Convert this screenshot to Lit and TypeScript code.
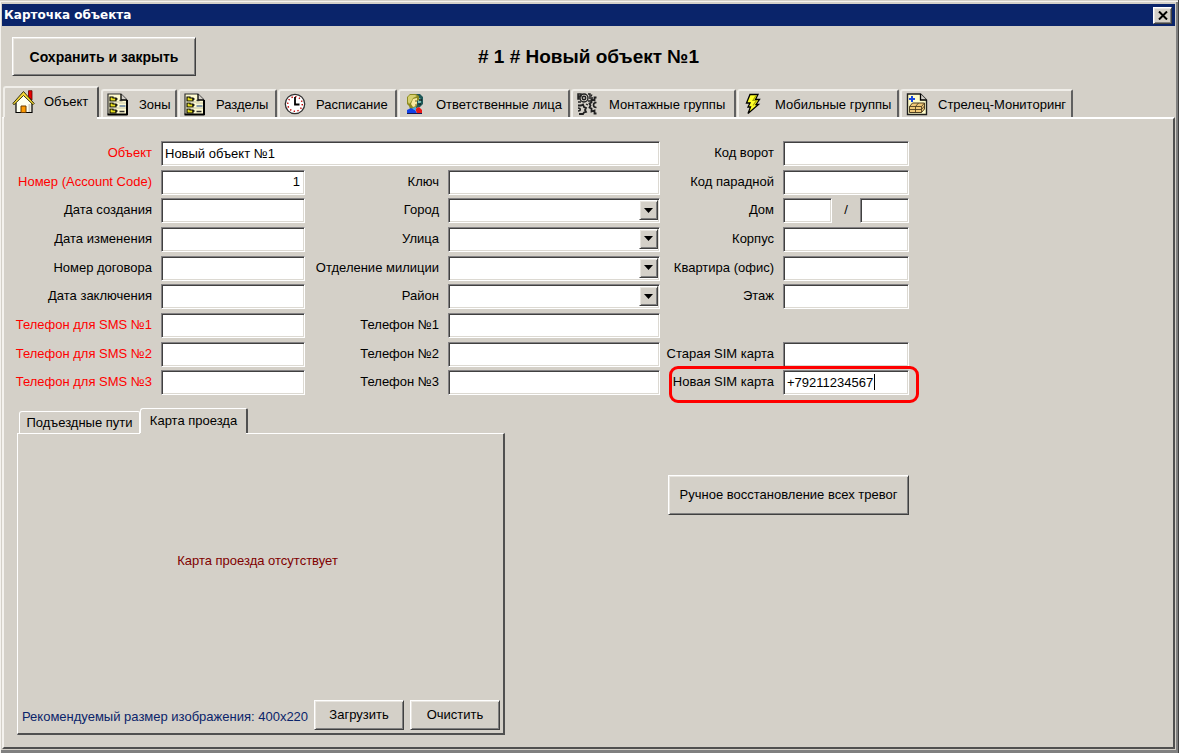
import { LitElement, html, css, svg, nothing } from "lit";
import { customElement, property, state } from "lit/decorators.js";
import { classMap } from "lit/directives/class-map.js";

const listIcon = svg`
  <path d="M1 1h13l6 6v14.500h-19z" fill="#fffbd0"/>
  <path d="M1 21.500V1h13l6 6" fill="none" stroke="#303030" stroke-width="1.200"/>
  <path d="M.500 21.500h20M20 7v15" stroke="#000" stroke-width="2"/>
  <path d="M14 1v6h6" fill="#d4d0c8" stroke="#000" stroke-width="1.300"/>
  <path d="M3 4h3v1h3v3H3zM3 10h3v1h3v3H3zM3 16h3v1h3v3H3z" fill="#e8e020" stroke="#000" stroke-width="1.100"/>
  <path d="M8.500 6h2M8.500 12h2M8.500 18h2" stroke="#000" stroke-width="1.500"/>
  <path d="M12.500 7.500h3M12.500 18.500h5" stroke="#303030" stroke-width="1.400"/>
  <path d="M12.500 13h6" stroke="#5a78a0" stroke-width="1.500"/>
  <path d="M2 9h10M12 10h7M2 15h17" stroke="#b8b8a0" stroke-width=".8"/>`;

const icons: Record<string, unknown> = {
  house: svg`
    <path d="M4 12 11.500 5l8 8v9.500H4z" fill="#fffff0"/>
    <path d="M4 13v9.500h16V12" fill="none" stroke="#000" stroke-width="1.200"/>
    <path d="M16.500.700h3.500V10l-3.500-3.500z" fill="#e80000" stroke="#600000" stroke-width=".8"/>
    <path d="M.800 13.500 11.500 1.500l10.700 12-1.200 1.200L11.500 5.500 2 14.700z" fill="#f8d838" stroke="#202000" stroke-width=".9"/>
    <path d="M9 22.500V16h5v6.500z" fill="#ff9a00" stroke="#6b3b00" stroke-width="1"/>
    <path d="M17.500 14v8" stroke="#d4d0c8" stroke-width="2"/>`,
  list: listIcon,
  clock: svg`
    <circle cx="11" cy="11" r="9.700" fill="#fff" stroke="#303030" stroke-width="1.300"/>
    <circle cx="11" cy="11" r="7.300" fill="none" stroke="#c00000" stroke-width="1.500" stroke-dasharray="1.300 2.522"/>
    <path d="M11 4v7.500h4.500" fill="none" stroke="#000" stroke-width="1.800"/>`,
  people: svg`
    <path d="M12 1h4l3 3v7l-3 3-4 1z" fill="#205858"/>
    <path d="M14 4l3 2v3l-1 2-2 1z" fill="#78c0b8"/>
    <path d="M15 7h3M14 11h3" stroke="#102020" stroke-width="1.500"/>
    <path d="M6 1h6l3 2v4l-2 1v5l-3 3H6l-1-3-2-2V4z" fill="#8c8a20"/>
    <path d="M6 2h5l2 1-4 2-2 4-2 2-1-2V4z" fill="#d6d070"/>
    <path d="M9 6l4-1v5l-1 3-3 1-2-3z" fill="#f8e8a0"/>
    <path d="M11 8h2M11 12h1.500" stroke="#705818"/>
    <path d="M3 20v-3l4-2 4 2 2 3z" fill="#1040e8"/>
    <path d="M11 16l4-2 3 3v3h-5z" fill="#e81818"/>
    <path d="M8 15l4-1v4z" fill="#48a8e8"/>
    <path d="M3 20.500h15" stroke="#181850"/>`,
  gears: svg`
    <g fill="none" stroke="#202020">
      <circle cx="7" cy="5" r="1.700" stroke-width="1.500"/>
      <circle cx="7" cy="5" r="4" stroke-width="1.400"/>
      <path d="M1 1h3v2H2v3H1zM11 1h2v3M11 8h3M1 9h3" stroke-width="1.500"/>
      <path d="M19.500 4.500h-2v3l-3-1v3l-2 1 1 2-1 2 2 1v3l3-1v3h2" stroke-width="1.800"/>
      <path d="M19.500 9.500c-4 0-4 5 0 5" stroke-width="1.600"/>
      <path d="M1 12.500h3l2-1 1 2.500 2 1-1 2 1 2-2 .500-1 1.500H2" stroke-width="1.800"/>
      <path d="M1 15c3 0 3 3 0 3" stroke-width="1.500"/>
      <path d="M12 5h4M15 1.500l-1 2M9 11l2 1" stroke-width="1.300"/>
    </g>`,
  bolt: svg`
    <path d="M7 1.500h8l-2.500 5h4l-3.500 5h2.500L5 20.500l2.500-6.500H5l2-4H3.500z" fill="#ffff28" stroke="#000" stroke-width="1.300"/>
    <path d="M13 2.500l-3 5h3.500l-3.500 5" fill="none" stroke="#a8a800" stroke-width="1.200"/>`,
  boxes: svg`
    <path d="M1.500 1h13l6 6v14.500h-19z" fill="#fffcc8" stroke="#202020" stroke-width="1.400"/>
    <path d="M14.500 1v6h6" fill="#d4d0c8" stroke="#000" stroke-width="1.300"/>
    <path d="M6 3v6M3 6h6" stroke="#1848e0" stroke-width="2"/>
    <path d="M3.500 13.500l3-3.500h12v6l-3 3.500h-12z" fill="#f0c878" stroke="#504020" stroke-width="1"/>
    <path d="M3.500 13.500h12v6M15.500 13.500l3-3.500M9.500 19.500v-6l3-3.500M3.500 16.500h12l3-3.500" fill="none" stroke="#504020" stroke-width=".9"/>`,
};

interface TabInfo {
  icon: string;
  label: string;
}

const tabs: TabInfo[] = [
  { icon: "house", label: "Объект" },
  { icon: "list", label: "Зоны" },
  { icon: "list", label: "Разделы" },
  { icon: "clock", label: "Расписание" },
  { icon: "people", label: "Ответственные лица" },
  { icon: "gears", label: "Монтажные группы" },
  { icon: "bolt", label: "Мобильные группы" },
  { icon: "boxes", label: "Стрелец-Мониторинг" },
];

type Kind = "text" | "select" | "pair" | "wide" | "number" | "marked" | "blank";

interface Field {
  label: string;
  kind?: Kind;
  value?: string;
  required?: boolean;
}

const rows: Field[][] = [
  [{ label: "Объект", kind: "wide", value: "Новый объект №1", required: true }, { label: "Код ворот" }],
  [{ label: "Номер (Account Code)", kind: "number", value: "1", required: true }, { label: "Ключ" }, { label: "Код парадной" }],
  [{ label: "Дата создания" }, { label: "Город", kind: "select" }, { label: "Дом", kind: "pair" }],
  [{ label: "Дата изменения" }, { label: "Улица", kind: "select" }, { label: "Корпус" }],
  [{ label: "Номер договора" }, { label: "Отделение милиции", kind: "select" }, { label: "Квартира (офис)" }],
  [{ label: "Дата заключения" }, { label: "Район", kind: "select" }, { label: "Этаж" }],
  [{ label: "Телефон для SMS №1", required: true }, { label: "Телефон №1" }, { label: "", kind: "blank" }],
  [{ label: "Телефон для SMS №2", required: true }, { label: "Телефон №2" }, { label: "Старая SIM карта" }],
  [{ label: "Телефон для SMS №3", required: true }, { label: "Телефон №3" }, { label: "Новая SIM карта", kind: "marked", value: "+79211234567" }],
];

@customElement("tab-icon")
export class TabIcon extends LitElement {
  static styles = css`
    :host { display: block; width: 24px; height: 24px; }
    svg { display: block; width: 24px; height: 24px; }
  `;
  @property() name = "";
  render() {
    return html`<svg viewBox="0 0 24 24" aria-hidden="true">${icons[this.name]}</svg>`;
  }
}

@customElement("app-root")
export class AppRoot extends LitElement {
  static styles = css`
    :host {
      display: block;
      font: 13px/16px "Liberation Sans", Arial, sans-serif;
      color: #000;
    }
    * { box-sizing: border-box; }
    button, input, select { font: inherit; color: inherit; margin: 0; border-radius: 0; outline: none; }
    .window {
      display: flex;
      flex-direction: column;
      min-height: 100vh;
      padding: 4px 3px 4px 2px;
      background: #d4d0c8;
      border-right: 1px solid #404040;
      box-shadow: inset 0 1px #d4d0c8, inset 1px 2px #f4f2ee, inset -2px -3px #808080;
    }
    .titlebar {
      display: flex;
      align-items: center;
      justify-content: space-between;
      height: 22px;
      padding: 0 3px 0 2px;
      background: #0a246a;
      color: #fff;
      font: bold 12px/16px "DejaVu Sans", sans-serif;
    }
    .close { display: grid; place-items: center; width: 19px; height: 17px; }
    .push {
      padding: 0;
      background: #d4d0c8;
      border: 1px solid;
      border-color: #fff #404040 #404040 #fff;
      box-shadow: inset 1px 1px #e8e5df, inset -1px -1px #808080;
      white-space: nowrap;
    }
    .header {
      display: grid;
      grid-template-columns: 1fr auto 1fr;
      align-items: center;
      padding: 11px 10px 10px;
    }
    .save { width: 184px; height: 39px; font-size: 14px; font-weight: bold; }
    h1 { margin: 0; font-size: 19px; line-height: 22px; }
    .tabs {
      display: grid;
      grid-template-columns: 98px 77px 100px 120px 173px 166px 163px 174px;
      align-items: end;
      height: 31px;
      padding-left: 1px;
    }
    .tab {
      display: flex;
      align-items: center;
      gap: 8px;
      height: 28px;
      margin-right: 1px;
      padding: 1px 0 0 4px;
      background: #d4d0c8;
      border: 0 solid;
      border-width: 2px 2px 0 2px;
      border-color: #f0eee9 #606060 #f0eee9 #f0eee9;
      border-radius: 3px 2px 0 0;
      white-space: nowrap;
    }
    .tab.on { height: 31px; margin-right: 2px; padding: 0 0 2px 7px; border-right-color: #505050; }
    .panel {
      flex: 1;
      border: 2px solid;
      border-color: #fff #505050 #505050 #f4f2ee;
      padding: 22px 0 12px;
    }
    .joined { position: relative; }
    .joined::before {
      content: "";
      position: absolute;
      top: -2px;
      left: 0;
      width: 93px;
      height: 2px;
      background: #d4d0c8;
    }
    .fields {
      display: grid;
      grid-template-columns: 157px 144px 143px 212px 123px 126px;
      grid-template-rows: repeat(9, 1fr);
      height: 258px;
    }
    label { padding: 4px 9px 0 0; text-align: right; white-space: nowrap; }
    .required { color: #f00; }
    .cell { display: flex; align-items: start; }
    .wide { grid-column: span 3; }
    .skip { grid-column: span 2; }
    .box {
      width: 100%;
      min-width: 0;
      height: 25px;
      padding: 0 4px 1px 3px;
      appearance: none;
      background: #fff;
      border: 1px solid;
      border-color: #848284 #fff #fff #848284;
      box-shadow: inset 1px 1px #404040, inset -1px -1px #dcd9d2;
    }
    .number { text-align: right; }
    .combo { display: grid; grid-template-columns: 1fr 21px; }
    .combo .box { grid-area: 1 / 1 / 2 / 3; }
    .arrow {
      grid-area: 1 / 2;
      display: grid;
      place-items: center;
      width: 19px;
      height: 20px;
      margin-top: 2px;
      pointer-events: none;
    }
    .pair { justify-content: space-between; }
    .pair .box { width: 49px; }
    .slash { padding-top: 4px; }
    .marked { position: relative; }
    .mark {
      position: absolute;
      top: -4px;
      right: -10px;
      width: 250px;
      height: 37px;
      border: 3px solid #f00;
      border-radius: 9px;
      pointer-events: none;
    }
    .caret { position: absolute; left: 91px; top: 4px; width: 1px; height: 16px; background: #000; }
    .lower { display: grid; grid-template-columns: 488px auto; column-gap: 163px; justify-content: start; padding: 9px 0 0 13px; }
    .subtabs { display: flex; align-items: end; height: 25px; padding-left: 2px; }
    .subtab {
      width: 121px;
      height: 22px;
      padding: 0;
      background: #d4d0c8;
      border: 1px solid #fff;
      border-bottom: 0;
      border-radius: 3px 2px 0 0;
      white-space: nowrap;
    }
    .subtab.on { width: 108px; height: 25px; padding-bottom: 1px; border-right: 2px solid #505050; }
    .map {
      position: relative;
      display: grid;
      grid-template-rows: 1fr auto;
      height: 302px;
      padding: 0 3px 3px;
      border: solid;
      border-width: 1px 2px 2px 1px;
      border-color: #fff #505050 #505050 #fff;
    }
    .map-open::before {
      content: "";
      position: absolute;
      top: -1px;
      left: 122px;
      width: 106px;
      height: 1px;
      background: #d4d0c8;
    }
    .empty { margin: 0; padding-right: 6px; place-self: center; padding-bottom: 13px; color: #800000; }
    .footer { display: flex; align-items: center; gap: 6px; color: #0a246a; }
    .hint { flex: 1; padding: 4px 0 0 1px; white-space: nowrap; width: 0; }
    .small { width: 90px; height: 30px; color: #000; }
    .restore { width: 241px; height: 40px; margin-top: 67px; }
  `;

  @state() private active = 0;
  @state() private sub = 1;

  private control(f: Field, id: string) {
    switch (f.kind) {
      case "select":
        return html`<div class="cell combo">
          <select class="box" id=${id}><option></option></select>
          <span class="arrow push"><svg width="9" height="5" viewBox="0 0 9 5"><path d="M0 0h9L4.500 5z"/></svg></span>
        </div>`;
      case "pair":
        return html`<div class="cell pair">
          <input class="box" id=${id}><span class="slash">/</span><input class="box" aria-label="Дом, дробная часть">
        </div>`;
      case "marked":
        return html`<div class="cell marked">
          <input class="box" id=${id} .value=${f.value ?? ""}><span class="caret"></span><span class="mark"></span>
        </div>`;
      default:
        return html`<div class=${classMap({ cell: true, wide: f.kind === "wide" })}>
          <input class=${classMap({ box: true, number: f.kind === "number" })} id=${id} .value=${f.value ?? ""}>
        </div>`;
    }
  }

  render() {
    return html`<main class="window">
      <div class="titlebar">
        <span>Карточка объекта</span>
        <button class="push close" aria-label="Закрыть">
          <svg width="10" height="9" viewBox="0 0 10 9"><path d="M1 .5l8 8M9 .5l-8 8" stroke="#000" stroke-width="2"/></svg>
        </button>
      </div>
      <header class="header">
        <button class="push save">Сохранить и закрыть</button>
        <h1># 1 # Новый объект №1</h1>
      </header>
      <div class="tabs" role="tablist">
        ${tabs.map((t, i) => html`<button role="tab" aria-selected=${i === this.active}
          class=${classMap({ tab: true, on: i === this.active })} @click=${() => (this.active = i)}>
          <tab-icon name=${t.icon}></tab-icon><span>${t.label}</span>
        </button>`)}
      </div>
      <section class=${classMap({ panel: true, joined: this.active === 0 })}>
        <div class="fields">
          ${rows.map((row, r) => row.map((f, c) => f.kind === "blank"
            ? html`<span class="skip"></span>`
            : html`<label for="f${r}-${c}" class=${f.required ? "required" : nothing}>${f.label}</label>
                ${this.control(f, `f${r}-${c}`)}`))}
        </div>
        <div class="lower">
          <div>
            <div class="subtabs" role="tablist">
              ${["Подъездные пути", "Карта проезда"].map((t, i) => html`<button role="tab" aria-selected=${i === this.sub}
                class=${classMap({ subtab: true, on: i === this.sub })} @click=${() => (this.sub = i)}>${t}</button>`)}
            </div>
            <div class=${classMap({ map: true, "map-open": this.sub === 1 })}>
              <p class="empty">Карта проезда отсутствует</p>
              <div class="footer">
                <span class="hint">Рекомендуемый размер изображения: 400x220</span>
                <button class="push small">Загрузить</button>
                <button class="push small">Очистить</button>
              </div>
            </div>
          </div>
          <div><button class="push restore">Ручное восстановление всех тревог</button></div>
        </div>
      </section>
    </main>`;
  }
}
